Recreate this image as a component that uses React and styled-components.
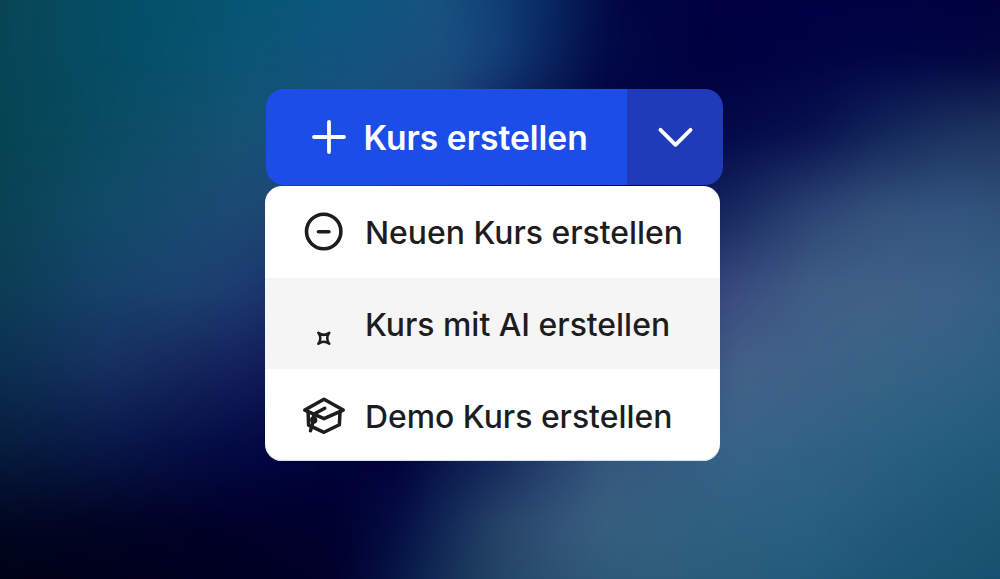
import React from 'react';
import styled, { createGlobalStyle } from 'styled-components';

const GlobalStyle = createGlobalStyle`
    * {
        margin: 0;
        padding: 0;
        box-sizing: border-box;
    }

    body {
        background: #000030;
        font-family: 'Inter', 'Liberation Sans', sans-serif;
    }
`;

// every band fades into the next one from top to bottom
const bands = [
    '#0a4552 0%, #044f66 14%, #055672 25%, #085a7e 34%, #155580 43%, #103f75 50%, #04245c 56%, #000440 62%, #000045 75%, #000042 88%, #00003c 100%',
    '#084452 0%, #044e66 14%, #0a5574 25%, #145380 37%, #1a4f80 45%, #123f78 50%, #0a2862 54%, #020a48 60%, #000040 70%, #000446 85%, #02063e 100%',
    '#04434f 0%, #0a4c62 12.5%, #155273 25%, #1b5080 37%, #203f75 45%, #101f58 50%, #000040 60%, #03094a 72%, #08124f 80%, #11255a 86%, #1a3260 92%, #20385f 100%',
    '#08404f 0%, #104b68 12.5%, #1d4a74 25%, #1b3a6c 40%, #000040 60%, #172a60 72.5%, #2c4575 80%, #34527b 86%, #335680 93%, #2f5078 100%',
    '#0a3c50 0%, #16426a 12.5%, #1b4270 20%, #1c3c70 25%, #101c58 40%, #15215a 60%, #3a4c80 72.5%, #3f5f85 80%, #406186 86%, #3c6086 93%, #306082 100%',
    '#08304c 0%, #163060 12.5%, #14205a 25%, #020540 40%, #0a1c50 60%, #446288 72.5%, #3e6287 80%, #386485 86%, #326284 93%, #2a5e7e 100%',
    '#061f3c 0%, #081848 12.5%, #030a45 25%, #000038 40%, #12265a 50%, #34557c 60%, #376487 72.5%, #316284 80%, #27607f 90%, #205a78 100%',
    '#010820 0%, #010424 12.5%, #00002a 25%, #00002e 34%, #040c42 40%, #112a58 45%, #264468 50%, #34567a 56%, #38607f 60%, #2f6080 70%, #286080 80%, #24597a 86%, #185470 100%',
    '#000010 0%, #000018 12.5%, #000020 25%, #000028 34%, #020a38 37%, #0c2450 42%, #1a3858 46%, #244a68 51%, #2a5272 56%, #2c5c78 65%, #225a78 78%, #185470 90%, #124f6c 100%',
];

const Page = styled.div`
    display: grid;
    width: 1000px;
    height: 579px;
    overflow: hidden;
`;

const Backdrop = styled.div`
    grid-area: 1 / 1;
    display: grid;
    filter: blur(10px);
    transform: scale(1.05, 1.08);
`;

const Band = styled.div`
    grid-area: 1 / 1;
    background: linear-gradient(to right, ${(props) => props.$stops});
    mask-image: ${(props) => props.$index === 0
        ? 'none'
        : `linear-gradient(to bottom, transparent ${(props.$index - 1) * 12.5}%, black ${props.$index * 12.5}%)`};
`;

const Content = styled.main`
    grid-area: 1 / 1;
    z-index: 1;
    padding: 89px 0 0 265px;
`;

const SplitButton = styled.div`
    display: flex;
    width: 457px;
    height: 96px;
    margin: 0 0 1px 1px;
    border-radius: 18px;
    overflow: hidden;
`;

const CreateButton = styled.button`
    display: flex;
    align-items: center;
    width: 361px;
    padding-left: 46px;
    gap: 17.5px;
    border: none;
    background: #1c4de9;
    color: white;
    font-family: inherit;
    font-size: 33.6px;
    font-weight: 600;
    white-space: nowrap;
`;

const ToggleButton = styled.button`
    display: flex;
    justify-content: center;
    align-items: center;
    width: 96px;
    border: none;
    background: #1f3bb8;
    color: white;
`;

const Menu = styled.ul`
    width: 455px;
    height: 275px;
    border-radius: 17px;
    background: white;
    box-shadow: inset 0 -1px 1px #cfe0e6;
    overflow: hidden;
    list-style: none;
`;

const MenuItem = styled.li`
    display: flex;
    align-items: center;
    height: 91px;
    padding: 2px 0 0 37px;
    gap: 19px;
    background: ${(props) => props.$active ? '#f5f5f5' : 'transparent'};
    color: #1d1d1f;
    font-size: 31.9px;
    font-weight: 480;
    white-space: nowrap;

    &:first-child {
        padding-top: 0;
        height: 92px;
    }

    &:last-child {
        padding-top: 3px;
    }
`;

const Icon = styled.svg`
    flex: none;
    fill: none;
    stroke: currentColor;
    stroke-width: ${(props) => props.$stroke || 3.4};
    stroke-linecap: round;
    stroke-linejoin: round;
`;

const PlusIcon = () => (
    <Icon width="34" height="34" viewBox="0 0 34 34" $stroke={3.8}>
        <path d="M17 2v30M2 17h30" />
    </Icon>
)

const ChevronIcon = () => (
    <Icon width="36" height="20" viewBox="0 0 36 20" $stroke={3.8}>
        <path d="M3.5 2.8l15 15 15-15" />
    </Icon>
)

const MinusCircleIcon = () => (
    <Icon width="44" height="44" viewBox="0 0 44 44" $stroke={3.6}>
        <circle cx="21.7" cy="21.5" r="17.2" />
        <path d="M16.5 21.7h10.4" />
    </Icon>
)

// four pointed star, sits in the lower half of its box
const SparkIcon = () => (
    <Icon width="44" height="44" viewBox="0 0 44 44" $stroke={2.5}>
        <path d="M16.3 29.8q5.5 4.2 11 0q-4.2 5.5 0 11q-5.5-4.2-11 0q4.2-5.5 0-11z" />
    </Icon>
)

const GraduationIcon = () => (
    <Icon width="44" height="44" viewBox="0 0 44 44" $stroke={3.5}>
        <path d="M22 5.2L41.2 16.1 22 24.7 2.8 16.1z" />
        <path d="M6.1 18.1l.5 13L22 38.3l15.4-7.6.6-12.6" />
        <path d="M22.8 14.3l-11.2 6v5.5L8.5 36.7" />
        <circle cx="11.7" cy="25.9" r="1.9" fill="currentColor" />
    </Icon>
)

const items = [
    { label: 'Neuen Kurs erstellen', icon: MinusCircleIcon },
    { label: 'Kurs mit AI erstellen', icon: SparkIcon, active: true },
    { label: 'Demo Kurs erstellen', icon: GraduationIcon },
];

const App = () => {
    return (
        <>
            <GlobalStyle />
            <Page>
                <Backdrop>
                    {bands.map((stops, index) => (
                        <Band key={ index } $stops={ stops } $index={ index } />
                    ))}
                </Backdrop>
                <Content>
                    <SplitButton>
                        <CreateButton>
                            <PlusIcon />
                            Kurs erstellen
                        </CreateButton>
                        <ToggleButton aria-label="Weitere Optionen">
                            <ChevronIcon />
                        </ToggleButton>
                    </SplitButton>
                    <Menu>
                        {items.map(({ label, icon: ItemIcon, active }) => (
                            <MenuItem key={ label } $active={ active }>
                                <ItemIcon />
                                {label}
                            </MenuItem>
                        ))}
                    </Menu>
                </Content>
            </Page>
        </>
    )
}

export default App;
